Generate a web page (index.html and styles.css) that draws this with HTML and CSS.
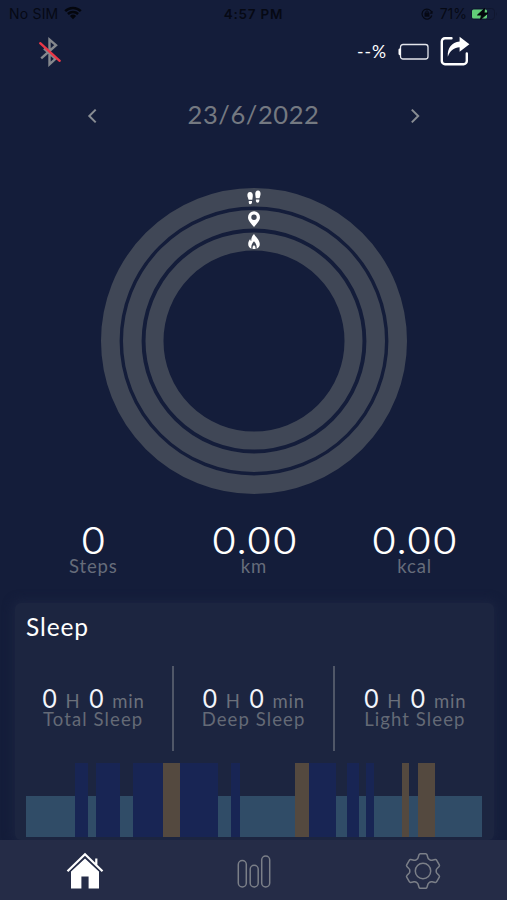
FILE: index.html
```html
<!DOCTYPE html>
<html lang="en">
<head>
    <meta charset="UTF-8">
    <meta name="viewport" content="width=device-width, initial-scale=1.0">
    <title>Activity</title>
    <link rel="stylesheet" href="styles.css">
</head>
<body>
    <div class="app">
        <div class="status-bar">
            <div class="status-left">
                <span class="carrier">No SIM</span>
                <svg class="wifi" width="18" height="14" viewBox="0 0 18 14">
                    <path d="M1.2 5.2a11.2 11.2 0 0 1 15.6 0M3.9 8a7.3 7.3 0 0 1 10.2 0" fill="none" stroke="#04060d" stroke-width="2.5"/>
                    <path d="M5.9 10a4.6 4.6 0 0 1 6.2 0L9 13.2z" fill="#04060d"/>
                </svg>
            </div>
            <span class="clock">4:57 PM</span>
            <div class="status-right">
                <svg width="12" height="12" viewBox="0 0 12 12" fill="none" stroke="#060914">
                    <path d="M10.8 7.5A5 5 0 1 1 10.9 5M9 5.2h2V3" stroke-width="1.2"/>
                    <rect x="4" y="5.2" width="4" height="3" fill="#060914"/>
                    <path d="M4.8 5V4a1.2 1.2 0 0 1 2.4 0v1"/>
                </svg>
                <span class="charge">71%</span>
                <svg width="27" height="12" viewBox="0 0 27 12">
                    <rect x=".5" y=".5" width="23" height="11" rx="3" fill="none" stroke="#10172f"/>
                    <rect x="1" y="1.5" width="15" height="9" rx="1.5" fill="#62cf78"/>
                    <path d="M25 4v4q1.5-2 0-4" fill="#10172f"/>
                    <path d="M13.5.5 6.5 7h4L9.5 11.5 17 5h-4z" fill="#03060b" stroke="#03060b"/>
                </svg>
            </div>
        </div>

        <header class="device-bar">
            <svg class="bluetooth" width="24" height="30" viewBox="0 0 24 30" fill="none">
                <path d="M3.2 21.3 18 8.2l-6.5-5.500v24.600l6-5.500L6 11.500" stroke="#85888d" stroke-width="2.4"/>
                <path d="m2.200 6.200 19.500 17.600" stroke="#eb3747" stroke-width="2.4" stroke-linecap="round"/>
            </svg>
            <div class="device-tools">
                <span class="device-charge">--%</span>
                <svg class="device-battery" width="32" height="18" viewBox="0 0 32 18">
                    <rect x="2.5" y="1.5" width="27.5" height="14.5" rx="2.5" fill="none" stroke="#e3e5eb" stroke-width="1.3"/>
                    <path d="M2.6 5.2C.9 5.2.5 6 .5 7v3.500c0 1 .4 1.800 2.100 1.800z" fill="#fff"/>
                </svg>
                <svg class="share" width="30" height="31" viewBox="0 0 30 31">
                    <path d="M11.5 2.2H5A3.2 3.2 0 0 0 1.8 5.4V25A3.2 3.2 0 0 0 5 28.2h18.6a3.2 3.2 0 0 0 3.2-3.2v-7.5" fill="none" stroke="#fff" stroke-width="2.4" stroke-linecap="round"/>
                    <path d="M19.6.8 29.4 8.3l-9.8 7.4v-4.400c-5.400.2-9.400 3.100-11.800 9.400-.5-8.700 3.700-14.300 11.800-15.200z" fill="#fff"/>
                </svg>
            </div>
        </header>

        <div class="date-row">
            <svg width="12" height="18" viewBox="0 0 12 18"><path d="M9.7 2.6 3.3 9l6.4 6.4"/></svg>
            <span class="date">23/6/2022</span>
            <svg width="12" height="18" viewBox="0 0 12 18"><path d="M2.8 2.6 9.2 9l-6.4 6.4"/></svg>
        </div>

        <svg class="rings" width="306" height="306" viewBox="0 0 306 306">
            <g fill="none" stroke="#404756">
                <circle cx="153" cy="153" r="143.7" stroke-width="18.6"/>
                <circle cx="153" cy="153" r="121.7" stroke-width="18.6"/>
                <circle cx="153" cy="153" r="99.5" stroke-width="18"/>
            </g>
            <g fill="#fff">
                <!-- steps -->
                <path d="M149 4c2 0 3.1 1.8 2.8 4.3l-.5 3.5h-3.7l-1.100-3.400C146 6 147 4 149 4zM147.800 13h3.200v1.500q-.2 1.800-1.700 1.800t-1.500-1.600z"/>
                <path d="M157 2.500c-2 0-3 1.800-2.700 4.300l.5 3.500h3.700l1-3.600c.4-2.400-.6-4.200-2.500-4.200zM154.900 11.500h3.400v1.500q-.2 1.700-1.700 1.700t-1.700-1.600z"/>
                <!-- distance -->
                <path fill-rule="evenodd" d="M153 23.300a6 6 0 0 0-6 6c0 3.800 4 7.200 6 9.700 2-2.500 6-5.900 6-9.700a6 6 0 0 0-6-6zm0 3.300a2.700 2.700 0 1 1 0 5.400 2.700 2.700 0 0 1 0-5.400z"/>
                <!-- calories -->
                <path d="M153 46c1 2.500 5.800 5.500 5.800 10 0 2.400-1.300 4-3.300 4.700.7-2.700-.6-5.500-2.500-7.500-1.900 2-3.200 4.800-2.500 7.500-2-.7-3.300-2.300-3.300-4.700 0-2.200.9-3.700 2-5 .2 1.200.5 1.800 1.100 2.100-.3-3 .9-5.200 2.700-7.100z"/>
                <path d="M153 57q2 1.300 1.500 4h-3q-.5-2.700 1.500-4z"/>
            </g>
        </svg>

        <div class="totals">
            <div class="total"><span class="total-value">0</span><span class="total-unit">Steps</span></div>
            <div class="total"><span class="total-value">0.00</span><span class="total-unit">km</span></div>
            <div class="total"><span class="total-value">0.00</span><span class="total-unit">kcal</span></div>
        </div>

        <section class="sleep-card">
            <h2>Sleep</h2>
            <div class="sleep-stats">
                <div class="sleep-stat">
                    <div class="duration"><b>0</b><span>H</span><b>0</b><span>min</span></div>
                    <div class="sleep-label">Total Sleep</div>
                </div>
                <div class="sleep-stat">
                    <div class="duration"><b>0</b><span>H</span><b>0</b><span>min</span></div>
                    <div class="sleep-label">Deep Sleep</div>
                </div>
                <div class="sleep-stat">
                    <div class="duration"><b>0</b><span>H</span><b>0</b><span>min</span></div>
                    <div class="sleep-label">Light Sleep</div>
                </div>
            </div>
            <div class="sleep-chart">
                <i class="light" style="flex-grow: 49"></i>
                <i class="deep" style="flex-grow: 13"></i>
                <i class="light" style="flex-grow: 7.5"></i>
                <i class="deep" style="flex-grow: 24.5"></i>
                <i class="light" style="flex-grow: 13"></i>
                <i class="deep" style="flex-grow: 29.5"></i>
                <i class="awake" style="flex-grow: 17.5"></i>
                <i class="deep" style="flex-grow: 38"></i>
                <i class="light" style="flex-grow: 13"></i>
                <i class="deep" style="flex-grow: 9"></i>
                <i class="light" style="flex-grow: 55"></i>
                <i class="awake" style="flex-grow: 14"></i>
                <i class="deep" style="flex-grow: 27"></i>
                <i class="light" style="flex-grow: 11"></i>
                <i class="deep" style="flex-grow: 11.5"></i>
                <i class="light" style="flex-grow: 7.5"></i>
                <i class="deep" style="flex-grow: 8"></i>
                <i class="light" style="flex-grow: 27.5"></i>
                <i class="awake" style="flex-grow: 7.5"></i>
                <i class="light" style="flex-grow: 8.5"></i>
                <i class="awake" style="flex-grow: 17.5"></i>
                <i class="light" style="flex-grow: 47"></i>
            </div>
        </section>

        <nav class="tab-bar">
            <a class="tab">
                <svg width="38" height="38" viewBox="0 0 38 38">
                    <path d="M5 19.5 19 6.5l14 13v17H22.6v-12h-7.2v12H5z" fill="#fff"/>
                    <path d="M1.5 19.3 19 2.2l17.5 17.1M30.3 12V6.5" fill="none" stroke="#252c47" stroke-width="5"/>
                    <path d="M1.5 19.3 19 2.2l17.5 17.1M30.3 12.5v-6" fill="none" stroke="#fff" stroke-width="2.2"/>
                </svg>
            </a>
            <a class="tab">
                <svg width="34" height="36" viewBox="0 0 34 36" fill="none" stroke="#7b7f88" stroke-width="1.5">
                    <rect x="1.3" y="7.5" width="8" height="26.5" rx="4"/>
                    <rect x="13.2" y="12.3" width="8" height="21.7" rx="4"/>
                    <rect x="24.7" y="3" width="8" height="31" rx="4"/>
                </svg>
            </a>
            <a class="tab">
                <svg width="36" height="38" viewBox="0 0 36 38" fill="none" stroke="#7b7f88" stroke-width="1.5" stroke-linejoin="round">
                    <path d="M15.3 1.8h5.4q1 0 1.3 1l.9 3q.3 1 1.3 1.6l1 .6q.9.5 1.9.3l3.100-.7q1-.2 1.500.7l2.600 4.500q.5.9-.2 1.600l-2.200 2.300q-.7.700-.7 1.700v1.200q0 1 .7 1.700l2.200 2.300q.7.700.2 1.600l-2.600 4.500q-.5.900-1.500.7l-3.100-.7q-1-.2-1.900.3l-1 .6q-1 .6-1.300 1.600l-.9 3q-.3 1-1.300 1h-5.400q-1 0-1.300-1l-.9-3q-.3-1-1.300-1.600l-1-.6q-.9-.5-1.900-.3l-3.100.7q-1 .2-1.500-.7l-2.600-4.500q-.5-.9.200-1.600l2.200-2.300q.7-.7.700-1.700v-1.200q0-1-.7-1.700l-2.200-2.300q-.7-.7-.2-1.600l2.600-4.500q.5-.9 1.500-.7l3.100.7q1 .2 1.900-.3l1-.6q1-.6 1.300-1.600l.9-3q.3-1 1.300-1z"/>
                    <circle cx="18" cy="19" r="7.7"/>
                </svg>
            </a>
        </nav>
    </div>
</body>
</html>
```
FILE: styles.css
```css
* {
    margin: 0;
    padding: 0;
    box-sizing: border-box;
}

body {
    background: #141d3a;
    color: #fff;
    font-family: Lato, sans-serif;
}

svg {
    display: block;
    flex-shrink: 0;
}

.app {
    width: 507px;
    height: 900px;
    overflow: hidden;
    display: flex;
    flex-direction: column;
}

.status-bar {
    height: 28px;
    padding: 0 9px;
    display: grid;
    grid-template-columns: 1fr auto 1fr;
    align-items: center;
    font-family: Inter, sans-serif;
    font-size: 14px;
    color: #060914;
}

.status-left,
.status-right {
    display: flex;
    align-items: center;
}

.carrier {
    letter-spacing: 0.2px;
}

.wifi {
    margin-left: 6px;
    margin-top: -1px;
}

.clock {
    font-size: 13.5px;
    font-weight: 600;
    letter-spacing: 0.8px;
}

.status-right {
    justify-content: flex-end;
}

.charge {
    margin: 0 4px 0 7px;
}

.device-bar {
    height: 48px;
    padding: 0 37px 0 38px;
    display: flex;
    align-items: center;
    justify-content: space-between;
}

.device-tools {
    display: flex;
    align-items: center;
}

.device-charge {
    font-size: 17.5px;
    letter-spacing: 1px;
}

.device-battery {
    margin: 0 10px 0 11px;
}

.date-row {
    height: 46px;
    margin-top: 16px;
    padding: 1px 86px 0;
    display: flex;
    align-items: center;
    justify-content: space-between;
}

.date-row svg {
    margin-top: 3px;
}

.date-row path {
    fill: none;
    stroke: #898d93;
    stroke-width: 2;
}

.date {
    color: #747981;
    font-size: 25.5px;
    letter-spacing: 0.6px;
}

.rings {
    margin: 51px 0 0 101px;
}

.device-bar > svg,
.device-tools {
    margin-top: 1px;
}

.totals {
    margin: 28px 12px 0 13px;
    height: 60px;
    display: grid;
    grid-template-columns: repeat(3, 1fr);
    text-align: center;
}

.total-value {
    display: block;
    height: 34px;
    line-height: 38px;
    font-family: Inter, sans-serif;
    font-size: 37px;
    font-weight: 300;
    transform: scaleX(1.12);
}

.total-unit {
    display: block;
    color: #666c7a;
    font-size: 18.5px;
    line-height: 20px;
    letter-spacing: 0.9px;
}

.sleep-card {
    width: 479px;
    height: 237px;
    margin: 22px 0 0 15px;
    padding: 8px 12px 0 11px;
    flex-shrink: 0;
    background: #1c2540;
    border-radius: 6px;
    box-shadow: 0 0 10px 3px #1a2340;
}

.sleep-card h2 {
    font-size: 24.5px;
    font-weight: 400;
    line-height: 32px;
    letter-spacing: 0.9px;
}

.sleep-stats {
    height: 85px;
    margin: 23px -13px 0 -12px;
    display: grid;
    grid-template-columns: repeat(3, 1fr);
}

.sleep-stat {
    padding-top: 20px;
    text-align: center;
}

.sleep-stat:not(:last-child) {
    border-right: 2px solid #505768;
}

.duration {
    height: 24px;
    display: flex;
    align-items: baseline;
    justify-content: center;
    gap: 8px;
    font-size: 18.5px;
    line-height: 26px;
    letter-spacing: 0.8px;
    color: #6b707b;
}

.duration b {
    font-family: Inter, sans-serif;
    font-size: 25px;
    font-weight: 400;
    letter-spacing: 0;
    color: #f2f5fb;
}

.sleep-label {
    color: #646a76;
    font-size: 18.5px;
    line-height: 18px;
    letter-spacing: 1.1px;
}

.sleep-chart {
    height: 73.5px;
    margin-top: 12px;
    display: flex;
    align-items: flex-end;
}

.sleep-chart i {
    flex-basis: 0;
    height: 100%;
}

.sleep-chart .light {
    height: 41px;
    background: #304c67;
}

.sleep-chart .deep {
    background: #182554;
}

.sleep-chart .awake {
    background: #54493f;
}

.tab-bar {
    height: 60px;
    padding-top: 2px;
    flex-shrink: 0;
    position: relative;
    background: #252c47;
    display: grid;
    grid-template-columns: repeat(3, 1fr);
}

.tab {
    display: flex;
    align-items: center;
    justify-content: center;
}
```
